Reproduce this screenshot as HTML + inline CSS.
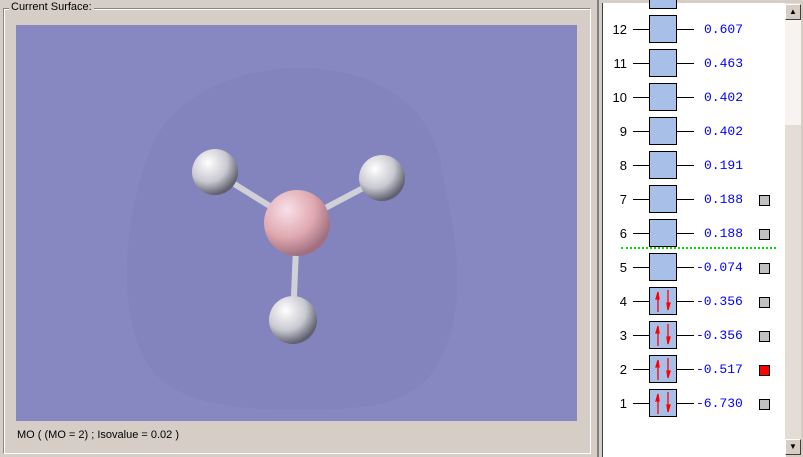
<!DOCTYPE html>
<html><head><style>
body{margin:0;width:803px;height:457px;background:#d6cec6;position:relative;overflow:hidden;font-family:"Liberation Sans",sans-serif}
.gb{position:absolute;left:3px;top:8px;width:586px;height:444px;border:1px solid #8a8580;border-right-color:#fff;border-bottom-color:#fff;box-shadow:inset 1px 1px 0 #fff}
.lbl{position:absolute;left:9px;top:1px;background:#d6cec6;font-size:11px;padding:0 2px;color:#000}
.view{position:absolute;left:16px;top:25px;width:561px;height:396px;background:#8787c2}
.status{position:absolute;left:17px;top:429px;font-size:11px}
.rp{position:absolute;left:597px;top:0;width:206px;height:457px;border-left:2px solid #808080;box-sizing:border-box}
.white{position:absolute;left:602px;top:3px;width:183px;height:454px;background:#fff;border-left:1px solid #404040}
.sb{position:absolute;left:785px;top:3px;width:16px;height:452px;background:#e4ddd6}
.thumb{position:absolute;left:785px;top:20px;width:16px;height:105px;background:#f6f3f0}
.arr{position:absolute;left:785px;width:16px;height:16px;background:#d6cec6;border:1px solid;border-color:#fff #404040 #404040 #fff;box-sizing:border-box;font-size:8px;text-align:center;line-height:14px}
.row{position:absolute;left:600px;height:30px;width:185px;font-family:"Liberation Mono",monospace;font-size:13px}
.n{position:absolute;right:158px;top:7px;font-family:"Liberation Sans",sans-serif;font-size:13px}
.l1{position:absolute;left:33px;top:14px;width:16px;height:1px;background:#000}
.l2{position:absolute;left:77px;top:14px;width:17px;height:1px;background:#000}
.box{position:absolute;left:49px;top:0;width:26px;height:26px;background:#a8c0e8;border:1px solid #000}
.v{position:absolute;left:104px;top:7px;color:#0000ff}
.v.neg{left:96px}
.sq{position:absolute;left:159px;top:10px;width:9px;height:9px;background:#c0c0c0;border:1px solid #000}
.box svg{position:absolute;left:0;top:0}
</style></head><body>
<div class="gb"></div>
<div class="lbl">Current Surface:</div>
<div class="view">
<svg width="561" height="396" viewBox="16 25 561 396">
<path d="M300 68 C380 68 430 110 440 160 C455 230 470 300 440 360 C420 400 380 410 300 410 C220 410 160 400 140 350 C115 290 130 200 150 150 C170 100 230 68 300 68Z" fill="#7e7eb6" opacity="0.4"/>
<defs>
<radialGradient id="h" cx="35%" cy="30%" r="70%"><stop offset="0" stop-color="#fff"/><stop offset="0.6" stop-color="#c8c8d0"/><stop offset="1" stop-color="#606070"/></radialGradient>
<radialGradient id="b" cx="35%" cy="30%" r="70%"><stop offset="0" stop-color="#f8e0e8"/><stop offset="0.6" stop-color="#e0a8b0"/><stop offset="1" stop-color="#a07080"/></radialGradient>
</defs>
<g stroke="#d0d0d8" stroke-width="6"><line x1="215" y1="172" x2="297" y2="223"/><line x1="382" y1="178" x2="297" y2="223"/><line x1="297" y1="223" x2="293" y2="320"/></g>
<circle cx="215" cy="172" r="23" fill="url(#h)"/>
<circle cx="382" cy="178" r="23" fill="url(#h)"/>
<circle cx="293" cy="320" r="24" fill="url(#h)"/>
<circle cx="297" cy="223" r="33" fill="url(#b)"/>
</svg>
</div>
<div class="status">MO ( (MO = 2) ; Isovalue = 0.02 )</div>
<div class="rp"></div>
<div class="white"></div>
<div class="sb"></div><div class="thumb"></div>
<div class="arr" style="top:4px">▲</div>
<div class="arr" style="top:439px">▼</div>
<div style="position:absolute;left:649px;top:0;width:26px;height:8px;background:#a8c0e8;border:1px solid #000;border-top:none"></div>
<div style="position:absolute;left:621px;top:247px;width:155px;border-top:2px dotted #00e000"></div>
<div class="row" style="top:15px"><span class="n">12</span><div class="l1"></div><div class="box"></div><div class="l2"></div><span class="v">0.607</span></div>
<div class="row" style="top:49px"><span class="n">11</span><div class="l1"></div><div class="box"></div><div class="l2"></div><span class="v">0.463</span></div>
<div class="row" style="top:83px"><span class="n">10</span><div class="l1"></div><div class="box"></div><div class="l2"></div><span class="v">0.402</span></div>
<div class="row" style="top:117px"><span class="n">9</span><div class="l1"></div><div class="box"></div><div class="l2"></div><span class="v">0.402</span></div>
<div class="row" style="top:151px"><span class="n">8</span><div class="l1"></div><div class="box"></div><div class="l2"></div><span class="v">0.191</span></div>
<div class="row" style="top:185px"><span class="n">7</span><div class="l1"></div><div class="box"></div><div class="l2"></div><span class="v">0.188</span><div class="sq"></div></div>
<div class="row" style="top:219px"><span class="n">6</span><div class="l1"></div><div class="box"></div><div class="l2"></div><span class="v">0.188</span><div class="sq"></div></div>
<div class="row" style="top:253px"><span class="n">5</span><div class="l1"></div><div class="box"></div><div class="l2"></div><span class="v neg">-0.074</span><div class="sq"></div></div>
<div class="row" style="top:287px"><span class="n">4</span><div class="l1"></div><div class="box"><svg width="26" height="26"><path d="M8 24V4M8 4l-2 7h3z M18 2v20M18 22l2-7h-3z" stroke="#f00" fill="#f00" stroke-width="1.3"/></svg></div><div class="l2"></div><span class="v neg">-0.356</span><div class="sq"></div></div>
<div class="row" style="top:321px"><span class="n">3</span><div class="l1"></div><div class="box"><svg width="26" height="26"><path d="M8 24V4M8 4l-2 7h3z M18 2v20M18 22l2-7h-3z" stroke="#f00" fill="#f00" stroke-width="1.3"/></svg></div><div class="l2"></div><span class="v neg">-0.356</span><div class="sq"></div></div>
<div class="row" style="top:355px"><span class="n">2</span><div class="l1"></div><div class="box"><svg width="26" height="26"><path d="M8 24V4M8 4l-2 7h3z M18 2v20M18 22l2-7h-3z" stroke="#f00" fill="#f00" stroke-width="1.3"/></svg></div><div class="l2"></div><span class="v neg">-0.517</span><div class="sq" style="background:#f00"></div></div>
<div class="row" style="top:389px"><span class="n">1</span><div class="l1"></div><div class="box"><svg width="26" height="26"><path d="M8 24V4M8 4l-2 7h3z M18 2v20M18 22l2-7h-3z" stroke="#f00" fill="#f00" stroke-width="1.3"/></svg></div><div class="l2"></div><span class="v neg">-6.730</span><div class="sq"></div></div>
</body></html>
